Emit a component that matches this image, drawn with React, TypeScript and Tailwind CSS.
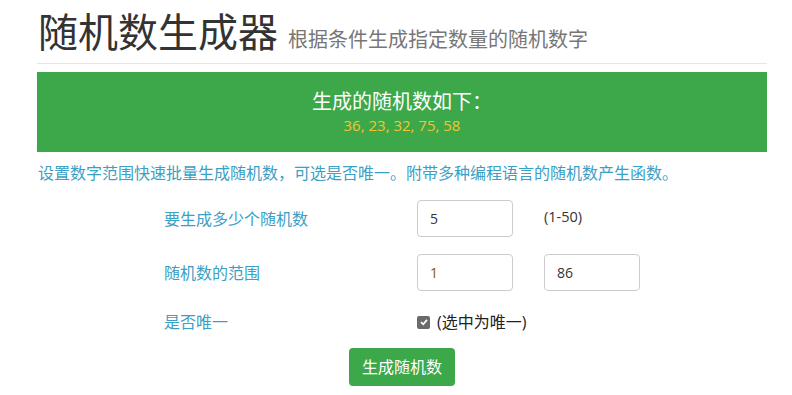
import React from 'react';

const font = { fontFamily: '"Open Sans", "Noto Sans CJK SC", sans-serif' };

export default function App() {
  const numbers = [36, 23, 32, 75, 58];
  return (
    <div className="w-[792px] h-[395px] bg-white" style={font}>
      <div className="ml-[37px] w-[730px]">
        <div className="flex items-baseline pt-[6px] pb-[5px] border-b border-[#e5e5e5]">
          <h1 className="text-[40px] leading-[52px] text-[#333] ml-[1px]">随机数生成器</h1>
          <span className="ml-[10px] text-[20px] text-[#777]">根据条件生成指定数量的随机数字</span>
        </div>

        <div className="mt-[8px] h-[80px] bg-[#3da84a] flex flex-col items-center justify-center">
          <div className="text-[20px] leading-[26px] text-white">生成的随机数如下：</div>
          <div className="text-[15px] leading-[20px] text-[#f4c430]">{numbers.join(', ')}</div>
        </div>

        <p className="mt-[10px] text-[16px] leading-[22px] text-[#3aa0c4] ml-[1px]">
          设置数字范围快速批量生成随机数，可选是否唯一。附带多种编程语言的随机数产生函数。
        </p>

        <div className="mt-[16px] flex flex-col">
          <div className="flex items-center h-[37px]">
            <label className="ml-[127px] w-[253px] text-[16px] text-[#3aa0c4]">要生成多少个随机数</label>
            <div className="w-[96px] h-[37px] border border-[#ccc] rounded px-[12px] flex items-center text-[14px] text-[#333]">5</div>
            <span className="ml-[31px] text-[14.5px] text-[#333] -mt-[4px]">(1-50)</span>
          </div>
          <div className="flex items-center h-[37px] mt-[17px]">
            <label className="ml-[127px] w-[253px] text-[16px] text-[#3aa0c4]">随机数的范围</label>
            <div className="w-[96px] h-[37px] border border-[#ccc] rounded px-[12px] flex items-center text-[14px] text-[#8a5a00]">1</div>
            <div className="ml-[31px] w-[96px] h-[37px] border border-[#ccc] rounded px-[12px] flex items-center text-[14px] text-[#333]">86</div>
          </div>
          <div className="flex items-center mt-[20px] h-[22px]">
            <label className="ml-[127px] w-[253px] text-[16px] text-[#3aa0c4]">是否唯一</label>
            <span className="w-[13px] h-[13px] rounded-[2px] bg-[#6b6b6b] flex items-center justify-center">
              <svg width="10" height="10" viewBox="0 0 10 10">
                <path d="M2 5.2 L4.2 7.3 L8 2.8" fill="none" stroke="white" strokeWidth="1.8" />
              </svg>
            </span>
            <span className="ml-[7px] text-[16px] text-[#222]">(选中为唯一)</span>
          </div>
          <div className="flex justify-center mt-[15px]">
            <button className="w-[106px] h-[38px] rounded bg-[#3da84a] text-white text-[16px]">生成随机数</button>
          </div>
        </div>
      </div>
    </div>
  );
}
